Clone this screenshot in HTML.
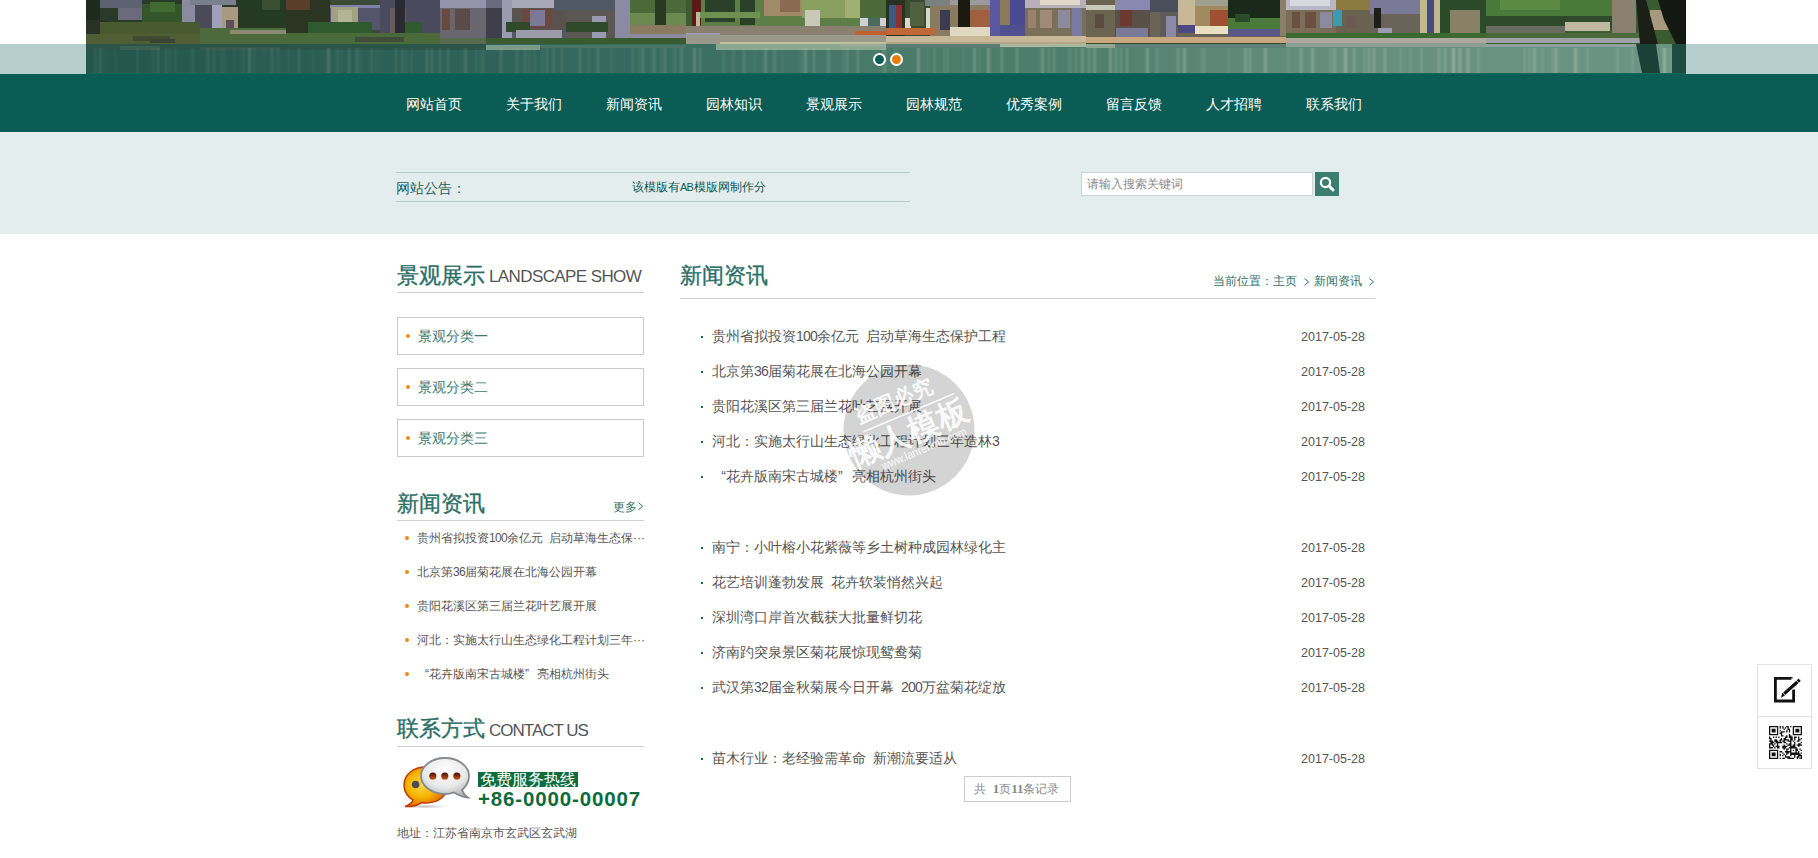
<!DOCTYPE html>
<html><head><meta charset="utf-8">
<style>
*{margin:0;padding:0;box-sizing:border-box}
html,body{width:1818px;height:858px;overflow:hidden;background:#fff;font-family:"Liberation Sans",sans-serif;}
.a{position:absolute;white-space:nowrap}
#topband{position:absolute;left:0;top:44px;width:1818px;height:30px;background:#b6cfcc}
#banner{position:absolute;left:86px;top:0;width:1600px;height:73px;overflow:hidden}
#nav{position:absolute;left:0;top:74px;width:1818px;height:58px;background:#0b5c54}
#nav span{position:absolute;top:22px;font-size:14px;line-height:16px;color:#fff;font-weight:500}
#notice{position:absolute;left:0;top:132px;width:1818px;height:102px;background:#e4eded}
.hline{position:absolute;height:1px}
.t22{font-size:22px;line-height:24px;color:#2b6f67;-webkit-text-stroke:0.35px #2b6f67}
.eng{font-size:17px;line-height:20px;color:#555}
.cat{position:absolute;left:397px;width:247px;height:38px;border:1px solid #c9cbd3}
.cat i{position:absolute;left:8px;top:16px;width:4px;height:4px;border-radius:2px;background:#f08a16}
.cat b{position:absolute;left:20px;top:10px;font-weight:normal;font-size:14px;line-height:16px;color:#3a7a70}
.ln{position:absolute;left:417px;font-size:12px;line-height:14px;color:#555}
.ld{position:absolute;left:405px;width:4px;height:4px;border-radius:2px;background:#f08a16}
.rn{position:absolute;left:712px;font-size:14px;line-height:16px;color:#555}
.rd{position:absolute;left:701px;width:2px;height:2px;background:#1d6b44}
.dt{position:absolute;right:453px;font-size:12.5px;line-height:14px;color:#555}
q{quotes:none;display:inline-block;width:1em}
.ql{text-align:right}.qr{text-align:left}
</style></head><body>
<div id="topband"></div>
<div class="a" style="left:86px;top:73px;width:1600px;height:1px;background:#0b6858"></div>
<div id="banner"><svg width="1600" height="73" viewBox="0 0 1600 73"><defs><linearGradient id="bwg" x1="0" y1="0" x2="1" y2="0"><stop offset="0" stop-color="#24564c"/><stop offset="0.12" stop-color="#2a5c52"/><stop offset="0.25" stop-color="#2f6258"/><stop offset="0.37" stop-color="#3a6e62"/><stop offset="0.5" stop-color="#4a7a6a"/><stop offset="0.62" stop-color="#4f7e6e"/><stop offset="0.75" stop-color="#628c7c"/><stop offset="0.87" stop-color="#6a9282"/><stop offset="1" stop-color="#6a9484"/></linearGradient><filter id="bl" x="-5%" y="0" width="110%" height="100%"><feGaussianBlur stdDeviation="0.9 0"/></filter></defs><rect x="0.0" y="0.0" width="200.0" height="44.0" fill="#2a3a28"/><rect x="14.0" y="0.0" width="42.0" height="8.0" fill="#5c6272"/><rect x="32.0" y="8.0" width="24.0" height="12.0" fill="#6a6a7a"/><rect x="0.0" y="0.0" width="14.0" height="20.0" fill="#1e2a1e"/><rect x="0.0" y="20.0" width="22.0" height="17.0" fill="#2a3228"/><rect x="56.0" y="4.0" width="40.0" height="24.0" fill="#35562a"/><rect x="64.0" y="2.0" width="25.0" height="10.0" fill="#3f6a30"/><rect x="96.0" y="0.0" width="13.0" height="30.0" fill="#8a8aa0"/><rect x="109.0" y="5.0" width="17.0" height="25.0" fill="#4a4a58"/><rect x="126.0" y="0.0" width="10.0" height="32.0" fill="#a0a0b8"/><rect x="104.0" y="0.0" width="46.0" height="5.0" fill="#7a7f90"/><rect x="136.0" y="7.0" width="16.0" height="21.0" fill="#a89a80"/><rect x="140.0" y="20.0" width="8.0" height="8.0" fill="#5a4e5a"/><rect x="152.0" y="0.0" width="48.0" height="28.0" fill="#253a22"/><rect x="176.0" y="0.0" width="18.0" height="10.0" fill="#3a5030"/><rect x="14.0" y="22.0" width="100.0" height="22.0" fill="#4a5a30"/><rect x="0.0" y="34.0" width="114.0" height="10.0" fill="#505e34"/><rect x="114.0" y="28.0" width="86.0" height="16.0" fill="#4d6a3c"/><rect x="144.0" y="30.0" width="56.0" height="4.0" fill="#8a8a70"/><rect x="47.0" y="36.0" width="37.0" height="5.0" fill="#3e4a32"/><rect x="64.0" y="39.0" width="25.0" height="4.0" fill="#3a4430"/><rect x="200.0" y="0.0" width="200.0" height="44.0" fill="#3a4a34"/><rect x="200.0" y="0.0" width="44.0" height="44.0" fill="#2c3422"/><rect x="200.0" y="0.0" width="24.0" height="10.0" fill="#5a3e2a"/><rect x="244.0" y="5.0" width="50.0" height="25.0" fill="#54546a"/><rect x="244.0" y="5.0" width="50.0" height="3.0" fill="#8080a8"/><rect x="245.0" y="7.0" width="27.0" height="21.0" fill="#a2a282"/><rect x="252.0" y="10.0" width="14.0" height="14.0" fill="#b4b496"/><rect x="294.0" y="0.0" width="60.0" height="33.0" fill="#4a4a5e"/><rect x="304.0" y="8.0" width="16.0" height="25.0" fill="#6a5a58"/><rect x="309.0" y="0.0" width="10.0" height="33.0" fill="#2a2a30"/><rect x="354.0" y="0.0" width="46.0" height="8.0" fill="#9494ac"/><rect x="354.0" y="8.0" width="46.0" height="32.0" fill="#6a6670"/><rect x="356.0" y="9.0" width="8.0" height="21.0" fill="#6a4a40"/><rect x="369.0" y="9.0" width="15.0" height="21.0" fill="#5a4a48"/><rect x="222.0" y="22.0" width="64.0" height="12.0" fill="#2f5a30"/><rect x="319.0" y="22.0" width="17.0" height="12.0" fill="#2f5a30"/><rect x="200.0" y="33.0" width="154.0" height="11.0" fill="#4a6a3a"/><rect x="269.0" y="37.0" width="49.0" height="5.0" fill="#3e4c38"/><rect x="354.0" y="38.0" width="46.0" height="6.0" fill="#5a6a50"/><rect x="400.0" y="0.0" width="200.0" height="44.0" fill="#55566a"/><rect x="400.0" y="0.0" width="16.0" height="44.0" fill="#3f3f4c"/><rect x="400.0" y="0.0" width="16.0" height="8.0" fill="#6a6a80"/><rect x="416.0" y="0.0" width="10.0" height="42.0" fill="#9a9ab0"/><rect x="426.0" y="0.0" width="54.0" height="8.0" fill="#a8a8b8"/><rect x="426.0" y="8.0" width="54.0" height="22.0" fill="#5a5250"/><rect x="436.0" y="9.0" width="30.0" height="19.0" fill="#6a4840"/><rect x="444.0" y="10.0" width="15.0" height="16.0" fill="#7a7a98"/><rect x="468.0" y="0.0" width="61.0" height="10.0" fill="#505866"/><rect x="480.0" y="10.0" width="49.0" height="30.0" fill="#5d5753"/><rect x="506.0" y="16.0" width="14.0" height="24.0" fill="#9a9ab0"/><rect x="420.0" y="22.0" width="24.0" height="10.0" fill="#2f4a2a"/><rect x="480.0" y="22.0" width="42.0" height="10.0" fill="#2f4a2a"/><rect x="430.0" y="30.0" width="46.0" height="10.0" fill="#9a9aa8"/><rect x="529.0" y="0.0" width="15.0" height="38.0" fill="#8a8aa0"/><rect x="544.0" y="0.0" width="56.0" height="13.0" fill="#4a6a3a"/><rect x="544.0" y="13.0" width="56.0" height="12.0" fill="#6a8a50"/><rect x="569.0" y="0.0" width="11.0" height="30.0" fill="#2a3a22"/><rect x="544.0" y="25.0" width="56.0" height="9.0" fill="#8a7a60"/><rect x="544.0" y="34.0" width="56.0" height="4.0" fill="#8a8aa0"/><rect x="400.0" y="38.0" width="200.0" height="6.0" fill="#3a5a30"/><rect x="600.0" y="0.0" width="200.0" height="26.0" fill="#5e7e48"/><rect x="600.0" y="0.0" width="6.0" height="26.0" fill="#3a5a30"/><rect x="606.0" y="0.0" width="9.0" height="28.0" fill="#5a1a18"/><rect x="610.0" y="12.0" width="4.0" height="14.0" fill="#c0b8a0"/><rect x="619.0" y="0.0" width="30.0" height="22.0" fill="#2a4028"/><rect x="654.0" y="0.0" width="15.0" height="25.0" fill="#2a4028"/><rect x="614.0" y="12.0" width="60.0" height="6.0" fill="#6e9050"/><rect x="678.0" y="0.0" width="38.0" height="16.0" fill="#a08a68"/><rect x="694.0" y="0.0" width="20.0" height="12.0" fill="#8a6a50"/><rect x="716.0" y="0.0" width="43.0" height="18.0" fill="#8aa060"/><rect x="719.0" y="10.0" width="15.0" height="16.0" fill="#c8c8b8"/><rect x="759.0" y="0.0" width="15.0" height="18.0" fill="#a0b070"/><rect x="774.0" y="0.0" width="26.0" height="18.0" fill="#4a6a3a"/><rect x="774.0" y="18.0" width="26.0" height="10.0" fill="#d0d0d8"/><rect x="782.0" y="18.0" width="12.0" height="10.0" fill="#4a6a5a"/><rect x="600.0" y="26.0" width="200.0" height="9.0" fill="#8a8070"/><rect x="769.0" y="31.0" width="31.0" height="4.0" fill="#c06030"/><rect x="600.0" y="33.0" width="34.0" height="7.0" fill="#9a9ab0"/><rect x="600.0" y="35.0" width="200.0" height="9.0" fill="#9a9888"/><rect x="634.0" y="42.0" width="166.0" height="2.0" fill="#c0c0a0"/><rect x="800.0" y="0.0" width="200.0" height="44.0" fill="#6a6658"/><rect x="800.0" y="0.0" width="19.0" height="36.0" fill="#2a3020"/><rect x="803.0" y="5.0" width="9.0" height="25.0" fill="#3a5a80"/><rect x="810.0" y="5.0" width="6.0" height="23.0" fill="#8a3030"/><rect x="819.0" y="0.0" width="25.0" height="36.0" fill="#3a4a30"/><rect x="819.0" y="18.0" width="6.0" height="14.0" fill="#d8d8c8"/><rect x="840.0" y="8.0" width="4.0" height="24.0" fill="#d8d8c8"/><rect x="824.0" y="2.0" width="14.0" height="24.0" fill="#506040"/><rect x="839.0" y="0.0" width="27.0" height="6.0" fill="#7a8080"/><rect x="844.0" y="6.0" width="20.0" height="30.0" fill="#8a7a60"/><rect x="854.0" y="10.0" width="10.0" height="20.0" fill="#3a3a50"/><rect x="864.0" y="0.0" width="40.0" height="36.0" fill="#8a7a60"/><rect x="864.0" y="0.0" width="40.0" height="5.0" fill="#9a9aa0"/><rect x="882.0" y="10.0" width="22.0" height="17.0" fill="#a06040"/><rect x="872.0" y="0.0" width="12.0" height="28.0" fill="#1a1a10"/><rect x="864.0" y="27.0" width="40.0" height="9.0" fill="#e0d8c0"/><rect x="904.0" y="0.0" width="10.0" height="36.0" fill="#5a58a0"/><rect x="914.0" y="0.0" width="10.0" height="36.0" fill="#8a7a5a"/><rect x="924.0" y="0.0" width="15.0" height="36.0" fill="#4a4a90"/><rect x="914.0" y="25.0" width="30.0" height="12.0" fill="#50508e"/><rect x="939.0" y="0.0" width="61.0" height="8.0" fill="#b8b0b8"/><rect x="954.0" y="0.0" width="40.0" height="5.0" fill="#e0d8c8"/><rect x="939.0" y="8.0" width="61.0" height="29.0" fill="#7a7058"/><rect x="942.0" y="10.0" width="8.0" height="18.0" fill="#9a8070"/><rect x="954.0" y="10.0" width="12.0" height="18.0" fill="#a08a78"/><rect x="972.0" y="10.0" width="12.0" height="18.0" fill="#8a8aa0"/><rect x="986.0" y="8.0" width="10.0" height="29.0" fill="#7a7aa0"/><rect x="800.0" y="28.0" width="49.0" height="7.0" fill="#c06838"/><rect x="800.0" y="36.0" width="200.0" height="8.0" fill="#c8b898"/><rect x="800.0" y="42.0" width="200.0" height="2.0" fill="#b0a888"/><rect x="1000.0" y="0.0" width="200.0" height="44.0" fill="#6a6458"/><rect x="1000.0" y="0.0" width="29.0" height="37.0" fill="#6a6450"/><rect x="1000.0" y="5.0" width="29.0" height="5.0" fill="#c8c8b8"/><rect x="1009.0" y="14.0" width="9.0" height="14.0" fill="#5a4a40"/><rect x="1029.0" y="0.0" width="35.0" height="10.0" fill="#8888b0"/><rect x="1029.0" y="10.0" width="35.0" height="27.0" fill="#5a5048"/><rect x="1034.0" y="10.0" width="12.0" height="16.0" fill="#6a3a30"/><rect x="1030.0" y="28.0" width="32.0" height="9.0" fill="#7a7a98"/><rect x="1064.0" y="0.0" width="35.0" height="12.0" fill="#4a4e5a"/><rect x="1074.0" y="12.0" width="18.0" height="26.0" fill="#605a58"/><rect x="1080.0" y="16.0" width="10.0" height="22.0" fill="#8a8aa8"/><rect x="1092.0" y="0.0" width="17.0" height="25.0" fill="#c8b898"/><rect x="1092.0" y="25.0" width="17.0" height="8.0" fill="#4a4a80"/><rect x="1109.0" y="0.0" width="33.0" height="6.0" fill="#a0a090"/><rect x="1109.0" y="6.0" width="33.0" height="20.0" fill="#a08a60"/><rect x="1124.0" y="10.0" width="18.0" height="16.0" fill="#a05030"/><rect x="1109.0" y="26.0" width="33.0" height="8.0" fill="#e8e0c0"/><rect x="1142.0" y="0.0" width="52.0" height="18.0" fill="#1a2a1a"/><rect x="1142.0" y="18.0" width="52.0" height="11.0" fill="#4a7a3a"/><rect x="1149.0" y="14.0" width="15.0" height="8.0" fill="#2a4a2a"/><rect x="1142.0" y="29.0" width="58.0" height="7.0" fill="#5a5888"/><rect x="1194.0" y="0.0" width="6.0" height="36.0" fill="#8a8068"/><rect x="1000.0" y="37.0" width="200.0" height="6.0" fill="#c8a880"/><rect x="1000.0" y="43.0" width="200.0" height="1.0" fill="#3a4a30"/><rect x="1200.0" y="0.0" width="200.0" height="44.0" fill="#6a6a5a"/><rect x="1200.0" y="0.0" width="50.0" height="10.0" fill="#b8b8c8"/><rect x="1204.0" y="0.0" width="40.0" height="6.0" fill="#d8d8e0"/><rect x="1200.0" y="10.0" width="50.0" height="26.0" fill="#7a6e58"/><rect x="1206.0" y="12.0" width="8.0" height="16.0" fill="#6a5040"/><rect x="1219.0" y="12.0" width="11.0" height="16.0" fill="#6a5040"/><rect x="1234.0" y="12.0" width="12.0" height="16.0" fill="#8a8aa0"/><rect x="1250.0" y="0.0" width="34.0" height="10.0" fill="#8a7a40"/><rect x="1250.0" y="10.0" width="34.0" height="26.0" fill="#6a6250"/><rect x="1260.0" y="16.0" width="10.0" height="12.0" fill="#6a5a50"/><rect x="1247.0" y="10.0" width="9.0" height="16.0" fill="#3a9ab0"/><rect x="1284.0" y="0.0" width="50.0" height="14.0" fill="#7a7a98"/><rect x="1284.0" y="14.0" width="50.0" height="22.0" fill="#6a6458"/><rect x="1288.0" y="8.0" width="7.0" height="20.0" fill="#1e1e18"/><rect x="1292.0" y="28.0" width="14.0" height="8.0" fill="#9a9ab0"/><rect x="1334.0" y="0.0" width="20.0" height="36.0" fill="#c0b890"/><rect x="1341.0" y="0.0" width="7.0" height="34.0" fill="#4a4a80"/><rect x="1354.0" y="0.0" width="46.0" height="36.0" fill="#2a4a2a"/><rect x="1364.0" y="10.0" width="30.0" height="26.0" fill="#8a8068"/><rect x="1200.0" y="33.0" width="200.0" height="5.0" fill="#3a6a30"/><rect x="1200.0" y="38.0" width="200.0" height="5.0" fill="#b0a8a0"/><rect x="1200.0" y="43.0" width="200.0" height="1.0" fill="#8a9a90"/><rect x="1400.0" y="0.0" width="200.0" height="44.0" fill="#3a5a30"/><rect x="1400.0" y="0.0" width="126.0" height="16.0" fill="#4a7a3a"/><rect x="1414.0" y="0.0" width="60.0" height="10.0" fill="#5a8a44"/><rect x="1400.0" y="16.0" width="126.0" height="12.0" fill="#2e4a2a"/><rect x="1479.0" y="22.0" width="45.0" height="9.0" fill="#c0b8a0"/><rect x="1400.0" y="26.0" width="79.0" height="7.0" fill="#6a6a60"/><rect x="1526.0" y="0.0" width="24.0" height="33.0" fill="#8a8070"/><rect x="1564.0" y="10.0" width="20.0" height="20.0" fill="#a89880"/><rect x="1400.0" y="33.0" width="164.0" height="5.0" fill="#4a6a3a"/><rect x="1400.0" y="38.0" width="164.0" height="5.0" fill="#a0a0a8"/><path d="M1550 0 L1560 0 L1572 44 L1554 44 Z" fill="#1a2018"/><path d="M1572 0 L1600 0 L1600 44 L1590 44 L1578 20 Z" fill="#141812"/><rect x="0" y="44" width="1600" height="29" fill="url(#bwg)"/><rect x="0.0" y="44.0" width="400.0" height="6.0" fill="#2a5448"/><rect x="34.0" y="46.0" width="40.0" height="4.0" fill="#3a6050"/><rect x="114.0" y="47.0" width="80.0" height="4.0" fill="#345a4e"/><rect x="400.0" y="45.0" width="54.0" height="5.0" fill="#7a9a88"/><rect x="454.0" y="45.0" width="146.0" height="3.0" fill="#4a7466"/><rect x="630.0" y="44.0" width="170.0" height="6.0" fill="#8aa890"/><rect x="754.0" y="44.0" width="46.0" height="3.0" fill="#9aaa94"/><rect x="800.0" y="44.0" width="164.0" height="4.0" fill="#5a7e74"/><rect x="914.0" y="44.0" width="100.0" height="3.0" fill="#aab89e"/><rect x="1000.0" y="44.0" width="29.0" height="4.0" fill="#90a890"/><rect x="1029.0" y="44.0" width="171.0" height="4.0" fill="#5e8078"/><rect x="1200.0" y="44.0" width="200.0" height="3.0" fill="#8aa094"/><rect x="1400.0" y="44.0" width="150.0" height="3.0" fill="#90a09a"/><g filter="url(#bl)"><rect x="8" y="48" width="2" height="25" fill="#d0e0c8" opacity="0.11"/><rect x="13" y="48" width="3" height="25" fill="#d0e0c8" opacity="0.11"/><rect x="19" y="48" width="1" height="25" fill="#d0e0c8" opacity="0.06"/><rect x="29" y="48" width="1" height="25" fill="#d0e0c8" opacity="0.09"/><rect x="51" y="48" width="1" height="25" fill="#d0e0c8" opacity="0.15"/><rect x="66" y="48" width="2" height="25" fill="#d0e0c8" opacity="0.07"/><rect x="71" y="48" width="2" height="25" fill="#d0e0c8" opacity="0.12"/><rect x="79" y="48" width="2" height="25" fill="#d0e0c8" opacity="0.11"/><rect x="83" y="48" width="2" height="25" fill="#d0e0c8" opacity="0.07"/><rect x="89" y="48" width="1" height="25" fill="#d0e0c8" opacity="0.14"/><rect x="106" y="48" width="1" height="25" fill="#d0e0c8" opacity="0.16"/><rect x="121" y="48" width="2" height="25" fill="#d0e0c8" opacity="0.12"/><rect x="127" y="48" width="2" height="25" fill="#d0e0c8" opacity="0.09"/><rect x="135" y="48" width="1" height="25" fill="#d0e0c8" opacity="0.14"/><rect x="138" y="48" width="1" height="25" fill="#d0e0c8" opacity="0.11"/><rect x="148" y="48" width="1" height="25" fill="#d0e0c8" opacity="0.07"/><rect x="156" y="48" width="2" height="25" fill="#d0e0c8" opacity="0.08"/><rect x="162" y="48" width="3" height="25" fill="#d0e0c8" opacity="0.16"/><rect x="168" y="48" width="1" height="25" fill="#d0e0c8" opacity="0.16"/><rect x="178" y="48" width="1" height="25" fill="#d0e0c8" opacity="0.07"/><rect x="185" y="48" width="2" height="25" fill="#d0e0c8" opacity="0.13"/><rect x="191" y="48" width="2" height="25" fill="#d0e0c8" opacity="0.07"/><rect x="202" y="48" width="1" height="25" fill="#d0e0c8" opacity="0.10"/><rect x="212" y="48" width="2" height="25" fill="#d0e0c8" opacity="0.13"/><rect x="227" y="48" width="1" height="25" fill="#d0e0c8" opacity="0.09"/><rect x="241" y="48" width="3" height="25" fill="#d0e0c8" opacity="0.18"/><rect x="250" y="48" width="3" height="25" fill="#d0e0c8" opacity="0.07"/><rect x="255" y="48" width="1" height="25" fill="#d0e0c8" opacity="0.09"/><rect x="262" y="48" width="2" height="25" fill="#d0e0c8" opacity="0.17"/><rect x="270" y="48" width="2" height="25" fill="#d0e0c8" opacity="0.18"/><rect x="274" y="48" width="1" height="25" fill="#d0e0c8" opacity="0.13"/><rect x="284" y="48" width="3" height="25" fill="#d0e0c8" opacity="0.09"/><rect x="290" y="48" width="1" height="25" fill="#d0e0c8" opacity="0.12"/><rect x="294" y="48" width="1" height="25" fill="#d0e0c8" opacity="0.10"/><rect x="309" y="48" width="2" height="25" fill="#d0e0c8" opacity="0.12"/><rect x="315" y="48" width="3" height="25" fill="#d0e0c8" opacity="0.09"/><rect x="320" y="48" width="1" height="25" fill="#d0e0c8" opacity="0.11"/><rect x="325" y="48" width="1" height="25" fill="#d0e0c8" opacity="0.15"/><rect x="340" y="48" width="2" height="25" fill="#d0e0c8" opacity="0.16"/><rect x="345" y="48" width="2" height="25" fill="#d0e0c8" opacity="0.16"/><rect x="353" y="48" width="2" height="25" fill="#d0e0c8" opacity="0.15"/><rect x="361" y="48" width="2" height="25" fill="#d0e0c8" opacity="0.15"/><rect x="378" y="48" width="3" height="25" fill="#d0e0c8" opacity="0.14"/><rect x="390" y="48" width="1" height="25" fill="#d0e0c8" opacity="0.14"/><rect x="395" y="48" width="3" height="25" fill="#d0e0c8" opacity="0.08"/><rect x="414" y="48" width="2" height="25" fill="#d0e0c8" opacity="0.16"/><rect x="430" y="48" width="2" height="25" fill="#d0e0c8" opacity="0.12"/><rect x="438" y="48" width="2" height="25" fill="#d0e0c8" opacity="0.14"/><rect x="443" y="48" width="1" height="25" fill="#d0e0c8" opacity="0.16"/><rect x="448" y="48" width="1" height="25" fill="#d0e0c8" opacity="0.15"/><rect x="456" y="48" width="1" height="25" fill="#d0e0c8" opacity="0.15"/><rect x="460" y="48" width="2" height="25" fill="#d0e0c8" opacity="0.15"/><rect x="466" y="48" width="3" height="25" fill="#d0e0c8" opacity="0.10"/><rect x="475" y="48" width="2" height="25" fill="#d0e0c8" opacity="0.13"/><rect x="493" y="48" width="2" height="25" fill="#d0e0c8" opacity="0.19"/><rect x="502" y="48" width="1" height="25" fill="#d0e0c8" opacity="0.17"/><rect x="511" y="48" width="2" height="25" fill="#d0e0c8" opacity="0.18"/><rect x="525" y="48" width="1" height="25" fill="#d0e0c8" opacity="0.14"/><rect x="546" y="48" width="1" height="25" fill="#d0e0c8" opacity="0.21"/><rect x="553" y="48" width="1" height="25" fill="#d0e0c8" opacity="0.13"/><rect x="556" y="48" width="2" height="25" fill="#d0e0c8" opacity="0.18"/><rect x="567" y="48" width="2" height="25" fill="#d0e0c8" opacity="0.19"/><rect x="575" y="48" width="1" height="25" fill="#d0e0c8" opacity="0.16"/><rect x="578" y="48" width="2" height="25" fill="#d0e0c8" opacity="0.20"/><rect x="588" y="48" width="2" height="25" fill="#d0e0c8" opacity="0.12"/><rect x="594" y="48" width="3" height="25" fill="#d0e0c8" opacity="0.14"/><rect x="607" y="48" width="3" height="25" fill="#d0e0c8" opacity="0.21"/><rect x="613" y="48" width="2" height="25" fill="#d0e0c8" opacity="0.18"/><rect x="637" y="48" width="1" height="25" fill="#d0e0c8" opacity="0.19"/><rect x="647" y="48" width="1" height="25" fill="#d0e0c8" opacity="0.22"/><rect x="657" y="48" width="2" height="25" fill="#d0e0c8" opacity="0.17"/><rect x="668" y="48" width="1" height="25" fill="#d0e0c8" opacity="0.14"/><rect x="678" y="48" width="3" height="25" fill="#d0e0c8" opacity="0.18"/><rect x="687" y="48" width="3" height="25" fill="#d0e0c8" opacity="0.13"/><rect x="696" y="48" width="1" height="25" fill="#d0e0c8" opacity="0.13"/><rect x="715" y="48" width="1" height="25" fill="#d0e0c8" opacity="0.21"/><rect x="718" y="48" width="3" height="25" fill="#d0e0c8" opacity="0.24"/><rect x="727" y="48" width="2" height="25" fill="#d0e0c8" opacity="0.19"/><rect x="741" y="48" width="3" height="25" fill="#d0e0c8" opacity="0.16"/><rect x="757" y="48" width="1" height="25" fill="#d0e0c8" opacity="0.16"/><rect x="760" y="48" width="2" height="25" fill="#d0e0c8" opacity="0.18"/><rect x="771" y="48" width="2" height="25" fill="#d0e0c8" opacity="0.23"/><rect x="797" y="48" width="3" height="25" fill="#d0e0c8" opacity="0.17"/><rect x="809" y="48" width="1" height="25" fill="#d0e0c8" opacity="0.25"/><rect x="831" y="48" width="3" height="25" fill="#d0e0c8" opacity="0.26"/><rect x="841" y="48" width="1" height="25" fill="#d0e0c8" opacity="0.16"/><rect x="848" y="48" width="1" height="25" fill="#d0e0c8" opacity="0.27"/><rect x="858" y="48" width="1" height="25" fill="#d0e0c8" opacity="0.23"/><rect x="861" y="48" width="1" height="25" fill="#d0e0c8" opacity="0.24"/><rect x="877" y="48" width="1" height="25" fill="#d0e0c8" opacity="0.16"/><rect x="887" y="48" width="3" height="25" fill="#d0e0c8" opacity="0.23"/><rect x="893" y="48" width="1" height="25" fill="#d0e0c8" opacity="0.19"/><rect x="901" y="48" width="3" height="25" fill="#d0e0c8" opacity="0.28"/><rect x="915" y="48" width="2" height="25" fill="#d0e0c8" opacity="0.23"/><rect x="930" y="48" width="2" height="25" fill="#d0e0c8" opacity="0.26"/><rect x="955" y="48" width="3" height="25" fill="#d0e0c8" opacity="0.23"/><rect x="962" y="48" width="2" height="25" fill="#d0e0c8" opacity="0.19"/><rect x="967" y="48" width="2" height="25" fill="#d0e0c8" opacity="0.21"/><rect x="983" y="48" width="2" height="25" fill="#d0e0c8" opacity="0.20"/><rect x="989" y="48" width="2" height="25" fill="#d0e0c8" opacity="0.18"/><rect x="995" y="48" width="3" height="25" fill="#d0e0c8" opacity="0.21"/><rect x="1002" y="48" width="2" height="25" fill="#d0e0c8" opacity="0.23"/><rect x="1007" y="48" width="3" height="25" fill="#d0e0c8" opacity="0.24"/><rect x="1023" y="48" width="3" height="25" fill="#d0e0c8" opacity="0.26"/><rect x="1029" y="48" width="2" height="25" fill="#d0e0c8" opacity="0.25"/><rect x="1034" y="48" width="2" height="25" fill="#d0e0c8" opacity="0.22"/><rect x="1040" y="48" width="2" height="25" fill="#d0e0c8" opacity="0.25"/><rect x="1060" y="48" width="3" height="25" fill="#d0e0c8" opacity="0.28"/><rect x="1070" y="48" width="2" height="25" fill="#d0e0c8" opacity="0.21"/><rect x="1091" y="48" width="2" height="25" fill="#d0e0c8" opacity="0.27"/><rect x="1097" y="48" width="3" height="25" fill="#d0e0c8" opacity="0.28"/><rect x="1115" y="48" width="1" height="25" fill="#d0e0c8" opacity="0.23"/><rect x="1118" y="48" width="1" height="25" fill="#d0e0c8" opacity="0.29"/><rect x="1142" y="48" width="1" height="25" fill="#d0e0c8" opacity="0.22"/><rect x="1158" y="48" width="3" height="25" fill="#d0e0c8" opacity="0.22"/><rect x="1163" y="48" width="2" height="25" fill="#d0e0c8" opacity="0.23"/><rect x="1178" y="48" width="3" height="25" fill="#d0e0c8" opacity="0.28"/><rect x="1202" y="48" width="1" height="25" fill="#d0e0c8" opacity="0.28"/><rect x="1214" y="48" width="2" height="25" fill="#d0e0c8" opacity="0.30"/><rect x="1225" y="48" width="3" height="25" fill="#d0e0c8" opacity="0.26"/><rect x="1244" y="48" width="1" height="25" fill="#d0e0c8" opacity="0.26"/><rect x="1247" y="48" width="3" height="25" fill="#d0e0c8" opacity="0.25"/><rect x="1258" y="48" width="3" height="25" fill="#d0e0c8" opacity="0.35"/><rect x="1267" y="48" width="2" height="25" fill="#d0e0c8" opacity="0.27"/><rect x="1278" y="48" width="1" height="25" fill="#d0e0c8" opacity="0.33"/><rect x="1282" y="48" width="2" height="25" fill="#d0e0c8" opacity="0.27"/><rect x="1287" y="48" width="2" height="25" fill="#d0e0c8" opacity="0.34"/><rect x="1298" y="48" width="2" height="25" fill="#d0e0c8" opacity="0.33"/><rect x="1314" y="48" width="1" height="25" fill="#d0e0c8" opacity="0.28"/><rect x="1324" y="48" width="1" height="25" fill="#d0e0c8" opacity="0.31"/><rect x="1335" y="48" width="1" height="25" fill="#d0e0c8" opacity="0.35"/><rect x="1352" y="48" width="2" height="25" fill="#d0e0c8" opacity="0.27"/><rect x="1358" y="48" width="2" height="25" fill="#d0e0c8" opacity="0.26"/><rect x="1366" y="48" width="3" height="25" fill="#d0e0c8" opacity="0.36"/><rect x="1373" y="48" width="2" height="25" fill="#d0e0c8" opacity="0.37"/><rect x="1381" y="48" width="2" height="25" fill="#d0e0c8" opacity="0.37"/><rect x="1392" y="48" width="1" height="25" fill="#d0e0c8" opacity="0.36"/><rect x="1438" y="48" width="1" height="25" fill="#d0e0c8" opacity="0.36"/><rect x="1443" y="48" width="1" height="25" fill="#d0e0c8" opacity="0.27"/><rect x="1447" y="48" width="3" height="25" fill="#d0e0c8" opacity="0.27"/><rect x="1456" y="48" width="1" height="25" fill="#d0e0c8" opacity="0.31"/><rect x="1466" y="48" width="1" height="25" fill="#d0e0c8" opacity="0.30"/><rect x="1469" y="48" width="2" height="25" fill="#d0e0c8" opacity="0.35"/><rect x="1488" y="48" width="3" height="25" fill="#d0e0c8" opacity="0.33"/><rect x="1501" y="48" width="1" height="25" fill="#d0e0c8" opacity="0.34"/><rect x="1531" y="48" width="1" height="25" fill="#d0e0c8" opacity="0.37"/><rect x="1546" y="48" width="1" height="25" fill="#d0e0c8" opacity="0.34"/><rect x="1556" y="48" width="2" height="25" fill="#d0e0c8" opacity="0.40"/><rect x="1577" y="48" width="3" height="25" fill="#d0e0c8" opacity="0.39"/><rect x="1584" y="48" width="1" height="25" fill="#d0e0c8" opacity="0.34"/></g><path d="M1550 44 L1570 44 L1574 73 L1556 73 Z" fill="#1a4038"/><rect x="1586.0" y="44.0" width="14.0" height="29.0" fill="#1e4a40"/><circle cx="793.5" cy="59.5" r="5.5" fill="#0b5e55" stroke="#fff" stroke-width="2"/><circle cx="810.5" cy="59.5" r="5.5" fill="#e87e04" stroke="#fff" stroke-width="2"/></svg></div>
<div id="nav">
<span style="left:406px">网站首页</span>
<span style="left:506px">关于我们</span>
<span style="left:606px">新闻资讯</span>
<span style="left:706px">园林知识</span>
<span style="left:806px">景观展示</span>
<span style="left:906px">园林规范</span>
<span style="left:1006px">优秀案例</span>
<span style="left:1106px">留言反馈</span>
<span style="left:1206px">人才招聘</span>
<span style="left:1306px">联系我们</span>
</div>
<div id="notice">
<div class="hline" style="left:396px;top:40px;width:514px;background:#b4cfcb"></div>
<div class="hline" style="left:396px;top:69px;width:514px;background:#b4cfcb"></div>
<span class="a" style="left:396px;top:48px;font-size:14px;line-height:16px;color:#1f5f58">网站公告<q style="width:14px;text-align:center">：</q></span>
<span class="a" style="left:632px;top:48px;font-size:12px;line-height:14px;color:#0e5b52">该模版有<span style="font-size:11px;letter-spacing:-0.9px;margin-right:1px">AB</span>模版网制作分</span>
<div class="a" style="left:1081px;top:40px;width:232px;height:24px;border:1px solid #cfd4d3;background:#fff"></div>
<span class="a" style="left:1087px;top:45px;font-size:12px;line-height:15px;color:#8a8a8a">请输入搜索关键词</span>
<div class="a" style="left:1315px;top:40px;width:24px;height:24px;background:#3b7d71">
<svg width="24" height="24" viewBox="0 0 24 24"><circle cx="10.5" cy="10.5" r="4.6" fill="none" stroke="#fff" stroke-width="2.2"/><path d="M14 14 L18 18" stroke="#fff" stroke-width="3" stroke-linecap="round"/></svg>
</div>
</div>
<!-- left column -->
<span class="a t22" style="left:397px;top:264px">景观展示</span>
<span class="a eng" style="left:489px;top:267px;letter-spacing:-0.6px">LANDSCAPE SHOW</span>
<div class="hline" style="left:397px;top:292px;width:247px;background:#cfcfcf"></div>
<div class="cat" style="top:317px"><i></i><b>景观分类一</b></div>
<div class="cat" style="top:368px"><i></i><b>景观分类二</b></div>
<div class="cat" style="top:419px"><i></i><b>景观分类三</b></div>
<span class="a t22" style="left:397px;top:492px">新闻资讯</span>
<span class="a" style="left:613px;top:500px;font-size:12px;line-height:14px;color:#2f7169">更多</span>
<svg class="a" style="left:637px;top:502px" width="8" height="9" viewBox="0 0 8 9"><path d="M1.5 0.6 L5.6 4.2 L1.5 7.8" fill="none" stroke="#2f7169" stroke-width="1"/></svg>
<div class="hline" style="left:397px;top:520px;width:247px;background:#cfcfcf"></div>
<i class="ld" style="top:536px"></i><span class="ln" style="top:531px">贵州省拟投资<span style="letter-spacing:-0.67px">100</span>余亿元<span style="display:inline-block;width:6px"></span>启动草海生态保<span style="letter-spacing:0px;margin-left:0px">···</span></span>
<i class="ld" style="top:570px"></i><span class="ln" style="top:565px">北京第<span style="letter-spacing:-0.67px">36</span>届菊花展在北海公园开幕</span>
<i class="ld" style="top:604px"></i><span class="ln" style="top:599px">贵阳花溪区第三届兰花叶艺展开展</span>
<i class="ld" style="top:638px"></i><span class="ln" style="top:633px">河北：实施太行山生态绿化工程计划三年<span style="letter-spacing:0px;margin-left:0px">···</span></span>
<i class="ld" style="top:672px"></i><span class="ln" style="top:667px"><q class="ql">“</q>花卉版南宋古城楼<q class="qr">”</q>亮相杭州街头</span>
<span class="a t22" style="left:397px;top:717px">联系方式</span>
<span class="a eng" style="left:489px;top:721px;letter-spacing:-1px">CONTACT US</span>
<div class="hline" style="left:397px;top:746px;width:247px;background:#cfcfcf"></div>
<svg class="a" style="left:396px;top:755px" width="80" height="58" viewBox="0 0 80 58">
<defs>
<radialGradient id="og" cx="0.4" cy="0.45" r="0.7"><stop offset="0" stop-color="#ffd84a"/><stop offset="0.45" stop-color="#f5b400"/><stop offset="0.8" stop-color="#e07000"/><stop offset="1" stop-color="#c84a00"/></radialGradient>
<radialGradient id="wg" cx="0.5" cy="0.3" r="0.75"><stop offset="0" stop-color="#ffffff"/><stop offset="0.6" stop-color="#e8e8e8"/><stop offset="1" stop-color="#a9abae"/></radialGradient>
<linearGradient id="dg" x1="0" y1="0" x2="0" y2="1"><stop offset="0" stop-color="#4a0800"/><stop offset="1" stop-color="#c85a10"/></linearGradient>
<radialGradient id="sh" cx="0.5" cy="0.5" r="0.5"><stop offset="0" stop-color="#000" stop-opacity="0.25"/><stop offset="1" stop-color="#000" stop-opacity="0"/></radialGradient>
</defs>
<ellipse cx="28" cy="51.5" rx="24" ry="2" fill="url(#sh)"/>
<path d="M30 12 C17 12 8 20 8 30 C8 37 12 42 17 45 C16 48 13 50 9 51.5 C16 52 22 50 26 47.5 C27 47.8 28.5 48 30 48 C43 48 52 40 52 30 C52 20 43 12 30 12 Z" fill="url(#og)" stroke="#c23c00" stroke-width="1.5"/>
<circle cx="19.6" cy="29.5" r="3.8" fill="#4b4f55"/>
<path d="M49 3 C36 3 25 11 25 21 C25 31 36 39 49 39 C52 39 55 38.5 58 37.5 C62 40 67 42.5 72 42.5 C69 40.5 67 38 66 35 C70 31.5 73 26.5 73 21 C73 11 62 3 49 3 Z" fill="url(#wg)" stroke="#858a90" stroke-width="1.8"/>
<circle cx="36.8" cy="21.1" r="3.6" fill="url(#dg)"/>
<circle cx="48.8" cy="21.1" r="3.6" fill="url(#dg)"/>
<circle cx="60.9" cy="21.1" r="3.6" fill="url(#dg)"/>
</svg>
<div class="a" style="left:478px;top:772px;width:100px;height:15px;background:#0e6b3b"></div>
<span class="a" style="left:480px;top:771px;font-size:16px;line-height:17px;color:#fff;letter-spacing:0px">免费服务热线</span>
<span class="a" style="left:478px;top:788px;font-size:20.5px;line-height:22px;font-weight:bold;color:#0e6b3b;letter-spacing:0.85px">+86-0000-00007</span>

<span class="a" style="left:397px;top:826px;font-size:12px;line-height:14px;color:#555">地址：江苏省南京市玄武区玄武湖</span>
<!-- right column -->
<span class="a t22" style="left:680px;top:264px">新闻资讯</span>
<span class="a" style="left:1213px;top:274px;font-size:12px;line-height:14px;color:#2f7169">当前位置<q style="width:12px;text-align:center">：</q>主页</span>
<svg class="a" style="left:1303px;top:278px" width="8" height="9" viewBox="0 0 8 9"><path d="M1.5 0.6 L5.6 3.9 L1.5 7.2" fill="none" stroke="#2f7169" stroke-width="1"/></svg>
<span class="a" style="left:1314px;top:274px;font-size:12px;line-height:14px;color:#2f7169">新闻资讯</span>
<svg class="a" style="left:1368px;top:278px" width="8" height="9" viewBox="0 0 8 9"><path d="M1.5 0.6 L5.6 3.9 L1.5 7.2" fill="none" stroke="#2f7169" stroke-width="1"/></svg>
<div class="hline" style="left:680px;top:298px;width:695px;background:#cfcfcf"></div>
<i class="rd" style="top:336px"></i><span class="rn" style="top:328px">贵州省拟投资<span style="letter-spacing:-0.78px">100</span>余亿元<span style="display:inline-block;width:7px"></span>启动草海生态保护工程</span><span class="dt" style="margin-top:1px;top:329px">2017-05-28</span>
<i class="rd" style="top:371px"></i><span class="rn" style="top:363px">北京第<span style="letter-spacing:-0.78px">36</span>届菊花展在北海公园开幕</span><span class="dt" style="margin-top:1px;top:364px">2017-05-28</span>
<i class="rd" style="top:406px"></i><span class="rn" style="top:398px">贵阳花溪区第三届兰花叶艺展开展</span><span class="dt" style="margin-top:1px;top:399px">2017-05-28</span>
<i class="rd" style="top:441px"></i><span class="rn" style="top:433px">河北：实施太行山生态绿化工程计划三年造林<span style="letter-spacing:-0.78px">3</span></span><span class="dt" style="margin-top:1px;top:434px">2017-05-28</span>
<i class="rd" style="top:476px"></i><span class="rn" style="top:468px"><q class="ql">“</q>花卉版南宋古城楼<q class="qr">”</q>亮相杭州街头</span><span class="dt" style="margin-top:1px;top:469px">2017-05-28</span>
<i class="rd" style="top:547px"></i><span class="rn" style="top:539px">南宁：小叶榕小花紫薇等乡土树种成园林绿化主</span><span class="dt" style="margin-top:1px;top:540px">2017-05-28</span>
<i class="rd" style="top:582px"></i><span class="rn" style="top:574px">花艺培训蓬勃发展<span style="display:inline-block;width:7px"></span>花卉软装悄然兴起</span><span class="dt" style="margin-top:1px;top:575px">2017-05-28</span>
<i class="rd" style="top:617px"></i><span class="rn" style="top:609px">深圳湾口岸首次截获大批量鲜切花</span><span class="dt" style="margin-top:1px;top:610px">2017-05-28</span>
<i class="rd" style="top:652px"></i><span class="rn" style="top:644px">济南趵突泉景区菊花展惊现鸳鸯菊</span><span class="dt" style="margin-top:1px;top:645px">2017-05-28</span>
<i class="rd" style="top:687px"></i><span class="rn" style="top:679px">武汉第<span style="letter-spacing:-0.78px">32</span>届金秋菊展今日开幕<span style="display:inline-block;width:7px"></span><span style="letter-spacing:-0.78px">200</span>万盆菊花绽放</span><span class="dt" style="margin-top:1px;top:680px">2017-05-28</span>
<i class="rd" style="top:758px"></i><span class="rn" style="top:750px">苗木行业：老经验需革命<span style="display:inline-block;width:7px"></span>新潮流要适从</span><span class="dt" style="margin-top:1px;top:751px">2017-05-28</span>
<div class="a" style="left:964px;top:776px;width:107px;height:26px;border:1px solid #cccccc;font-size:12px;line-height:24px;color:#888;padding-left:9px">共&nbsp;&nbsp;<b style="font-family:'Liberation Serif',serif;font-size:13px">1</b>页<b style="font-family:'Liberation Serif',serif;font-size:13px">11</b>条记录</div>
<!-- float -->
<div class="a" style="left:1757px;top:664px;width:55px;height:105px;border:1px solid #e3e3e3;background:#fff"></div>
<div class="hline" style="left:1757px;top:716px;width:55px;background:#e3e3e3"></div>
<svg class="a" style="left:1770px;top:674px" width="34" height="32" viewBox="0 0 34 32">
<path d="M22.5 4.4 H5.4 V27 H23.6 V15.5" fill="none" stroke="#111" stroke-width="2.8"/>
<path d="M20.5 4.4 L24.9 4.4 L24.9 9.5 Z" fill="#fff"/>
<path d="M14.23 22.39 L31.33 7.09 L28.67 4.11 L11.57 19.41 L10.3 24.8 Z" fill="#111" stroke="#fff" stroke-width="1"/>
<path d="M29.48 9.82 L25.75 5.65" stroke="#fff" stroke-width="0.8"/>
<path d="M15.88 21.99 L12.15 17.81" stroke="#fff" stroke-width="0.8"/>
</svg>
<svg class="a" style="left:1769px;top:726px" width="33" height="33" viewBox="0 0 25 25"><path d="M0 0h1v1h-1zM1 0h1v1h-1zM2 0h1v1h-1zM3 0h1v1h-1zM4 0h1v1h-1zM5 0h1v1h-1zM6 0h1v1h-1zM8 0h1v1h-1zM10 0h1v1h-1zM13 0h1v1h-1zM14 0h1v1h-1zM16 0h1v1h-1zM18 0h1v1h-1zM19 0h1v1h-1zM20 0h1v1h-1zM21 0h1v1h-1zM22 0h1v1h-1zM23 0h1v1h-1zM24 0h1v1h-1zM0 1h1v1h-1zM6 1h1v1h-1zM8 1h1v1h-1zM10 1h1v1h-1zM12 1h1v1h-1zM14 1h1v1h-1zM18 1h1v1h-1zM24 1h1v1h-1zM0 2h1v1h-1zM2 2h1v1h-1zM3 2h1v1h-1zM4 2h1v1h-1zM6 2h1v1h-1zM11 2h1v1h-1zM14 2h1v1h-1zM15 2h1v1h-1zM18 2h1v1h-1zM20 2h1v1h-1zM21 2h1v1h-1zM22 2h1v1h-1zM24 2h1v1h-1zM0 3h1v1h-1zM2 3h1v1h-1zM3 3h1v1h-1zM4 3h1v1h-1zM6 3h1v1h-1zM8 3h1v1h-1zM13 3h1v1h-1zM15 3h1v1h-1zM18 3h1v1h-1zM20 3h1v1h-1zM21 3h1v1h-1zM22 3h1v1h-1zM24 3h1v1h-1zM0 4h1v1h-1zM2 4h1v1h-1zM3 4h1v1h-1zM4 4h1v1h-1zM6 4h1v1h-1zM9 4h1v1h-1zM10 4h1v1h-1zM11 4h1v1h-1zM13 4h1v1h-1zM15 4h1v1h-1zM18 4h1v1h-1zM20 4h1v1h-1zM21 4h1v1h-1zM22 4h1v1h-1zM24 4h1v1h-1zM0 5h1v1h-1zM6 5h1v1h-1zM8 5h1v1h-1zM9 5h1v1h-1zM18 5h1v1h-1zM24 5h1v1h-1zM0 6h1v1h-1zM1 6h1v1h-1zM2 6h1v1h-1zM3 6h1v1h-1zM4 6h1v1h-1zM5 6h1v1h-1zM6 6h1v1h-1zM9 6h1v1h-1zM15 6h1v1h-1zM18 6h1v1h-1zM19 6h1v1h-1zM20 6h1v1h-1zM21 6h1v1h-1zM22 6h1v1h-1zM23 6h1v1h-1zM24 6h1v1h-1zM9 7h1v1h-1zM10 7h1v1h-1zM13 7h1v1h-1zM15 7h1v1h-1zM16 7h1v1h-1zM0 8h1v1h-1zM3 8h1v1h-1zM5 8h1v1h-1zM7 8h1v1h-1zM12 8h1v1h-1zM13 8h1v1h-1zM15 8h1v1h-1zM16 8h1v1h-1zM17 8h1v1h-1zM19 8h1v1h-1zM20 8h1v1h-1zM22 8h1v1h-1zM0 9h1v1h-1zM1 9h1v1h-1zM9 9h1v1h-1zM11 9h1v1h-1zM12 9h1v1h-1zM16 9h1v1h-1zM17 9h1v1h-1zM19 9h1v1h-1zM22 9h1v1h-1zM24 9h1v1h-1zM1 10h1v1h-1zM4 10h1v1h-1zM5 10h1v1h-1zM8 10h1v1h-1zM9 10h1v1h-1zM11 10h1v1h-1zM12 10h1v1h-1zM13 10h1v1h-1zM14 10h1v1h-1zM16 10h1v1h-1zM17 10h1v1h-1zM19 10h1v1h-1zM22 10h1v1h-1zM23 10h1v1h-1zM0 11h1v1h-1zM1 11h1v1h-1zM2 11h1v1h-1zM4 11h1v1h-1zM5 11h1v1h-1zM6 11h1v1h-1zM8 11h1v1h-1zM10 11h1v1h-1zM11 11h1v1h-1zM14 11h1v1h-1zM15 11h1v1h-1zM16 11h1v1h-1zM18 11h1v1h-1zM21 11h1v1h-1zM22 11h1v1h-1zM1 12h1v1h-1zM2 12h1v1h-1zM3 12h1v1h-1zM5 12h1v1h-1zM6 12h1v1h-1zM7 12h1v1h-1zM8 12h1v1h-1zM9 12h1v1h-1zM11 12h1v1h-1zM12 12h1v1h-1zM16 12h1v1h-1zM19 12h1v1h-1zM24 12h1v1h-1zM0 13h1v1h-1zM1 13h1v1h-1zM2 13h1v1h-1zM4 13h1v1h-1zM6 13h1v1h-1zM13 13h1v1h-1zM15 13h1v1h-1zM16 13h1v1h-1zM19 13h1v1h-1zM22 13h1v1h-1zM23 13h1v1h-1zM0 14h1v1h-1zM2 14h1v1h-1zM3 14h1v1h-1zM6 14h1v1h-1zM11 14h1v1h-1zM14 14h1v1h-1zM15 14h1v1h-1zM16 14h1v1h-1zM18 14h1v1h-1zM19 14h1v1h-1zM21 14h1v1h-1zM22 14h1v1h-1zM23 14h1v1h-1zM24 14h1v1h-1zM0 15h1v1h-1zM3 15h1v1h-1zM5 15h1v1h-1zM6 15h1v1h-1zM7 15h1v1h-1zM10 15h1v1h-1zM11 15h1v1h-1zM12 15h1v1h-1zM13 15h1v1h-1zM16 15h1v1h-1zM17 15h1v1h-1zM18 15h1v1h-1zM19 15h1v1h-1zM22 15h1v1h-1zM0 16h1v1h-1zM1 16h1v1h-1zM2 16h1v1h-1zM4 16h1v1h-1zM6 16h1v1h-1zM7 16h1v1h-1zM10 16h1v1h-1zM11 16h1v1h-1zM12 16h1v1h-1zM15 16h1v1h-1zM16 16h1v1h-1zM17 16h1v1h-1zM18 16h1v1h-1zM19 16h1v1h-1zM20 16h1v1h-1zM11 17h1v1h-1zM13 17h1v1h-1zM14 17h1v1h-1zM16 17h1v1h-1zM20 17h1v1h-1zM21 17h1v1h-1zM23 17h1v1h-1zM0 18h1v1h-1zM1 18h1v1h-1zM2 18h1v1h-1zM3 18h1v1h-1zM4 18h1v1h-1zM5 18h1v1h-1zM6 18h1v1h-1zM13 18h1v1h-1zM16 18h1v1h-1zM18 18h1v1h-1zM20 18h1v1h-1zM21 18h1v1h-1zM24 18h1v1h-1zM0 19h1v1h-1zM6 19h1v1h-1zM8 19h1v1h-1zM9 19h1v1h-1zM12 19h1v1h-1zM13 19h1v1h-1zM14 19h1v1h-1zM15 19h1v1h-1zM16 19h1v1h-1zM20 19h1v1h-1zM22 19h1v1h-1zM0 20h1v1h-1zM2 20h1v1h-1zM3 20h1v1h-1zM4 20h1v1h-1zM6 20h1v1h-1zM10 20h1v1h-1zM13 20h1v1h-1zM14 20h1v1h-1zM16 20h1v1h-1zM17 20h1v1h-1zM18 20h1v1h-1zM19 20h1v1h-1zM20 20h1v1h-1zM21 20h1v1h-1zM22 20h1v1h-1zM24 20h1v1h-1zM0 21h1v1h-1zM2 21h1v1h-1zM3 21h1v1h-1zM4 21h1v1h-1zM6 21h1v1h-1zM8 21h1v1h-1zM11 21h1v1h-1zM13 21h1v1h-1zM16 21h1v1h-1zM17 21h1v1h-1zM18 21h1v1h-1zM19 21h1v1h-1zM20 21h1v1h-1zM21 21h1v1h-1zM22 21h1v1h-1zM23 21h1v1h-1zM0 22h1v1h-1zM2 22h1v1h-1zM3 22h1v1h-1zM4 22h1v1h-1zM6 22h1v1h-1zM8 22h1v1h-1zM10 22h1v1h-1zM12 22h1v1h-1zM16 22h1v1h-1zM19 22h1v1h-1zM22 22h1v1h-1zM23 22h1v1h-1zM24 22h1v1h-1zM0 23h1v1h-1zM6 23h1v1h-1zM12 23h1v1h-1zM13 23h1v1h-1zM14 23h1v1h-1zM15 23h1v1h-1zM19 23h1v1h-1zM21 23h1v1h-1zM22 23h1v1h-1zM24 23h1v1h-1zM0 24h1v1h-1zM1 24h1v1h-1zM2 24h1v1h-1zM3 24h1v1h-1zM4 24h1v1h-1zM5 24h1v1h-1zM6 24h1v1h-1zM8 24h1v1h-1zM10 24h1v1h-1zM11 24h1v1h-1zM14 24h1v1h-1zM15 24h1v1h-1zM16 24h1v1h-1zM17 24h1v1h-1zM18 24h1v1h-1zM21 24h1v1h-1zM23 24h1v1h-1zM24 24h1v1h-1z" fill="#111"/></svg>
<svg class="a" style="left:843px;top:364px" width="132" height="132" viewBox="0 0 132 132">
<circle cx="66" cy="66" r="65.5" fill="#000" fill-opacity="0.17"/>
<g transform="rotate(-23 66 66)" fill="#fff" fill-opacity="0.9" font-family="Liberation Sans, sans-serif">
<text x="23" y="40" font-size="20.5" font-weight="bold" textLength="82" lengthAdjust="spacingAndGlyphs">盗图必究</text>
<path d="M23 50 L122 50" stroke="#fff" stroke-opacity="0.9" stroke-width="1.6"/>
<text x="1.5" y="79" font-size="31.5" font-weight="bold" textLength="126" lengthAdjust="spacingAndGlyphs">懒人模板</text>
<text x="27" y="93" font-size="12" textLength="91" lengthAdjust="spacingAndGlyphs">www.lanrenmb.com</text>
</g>
</svg>

</body></html>
